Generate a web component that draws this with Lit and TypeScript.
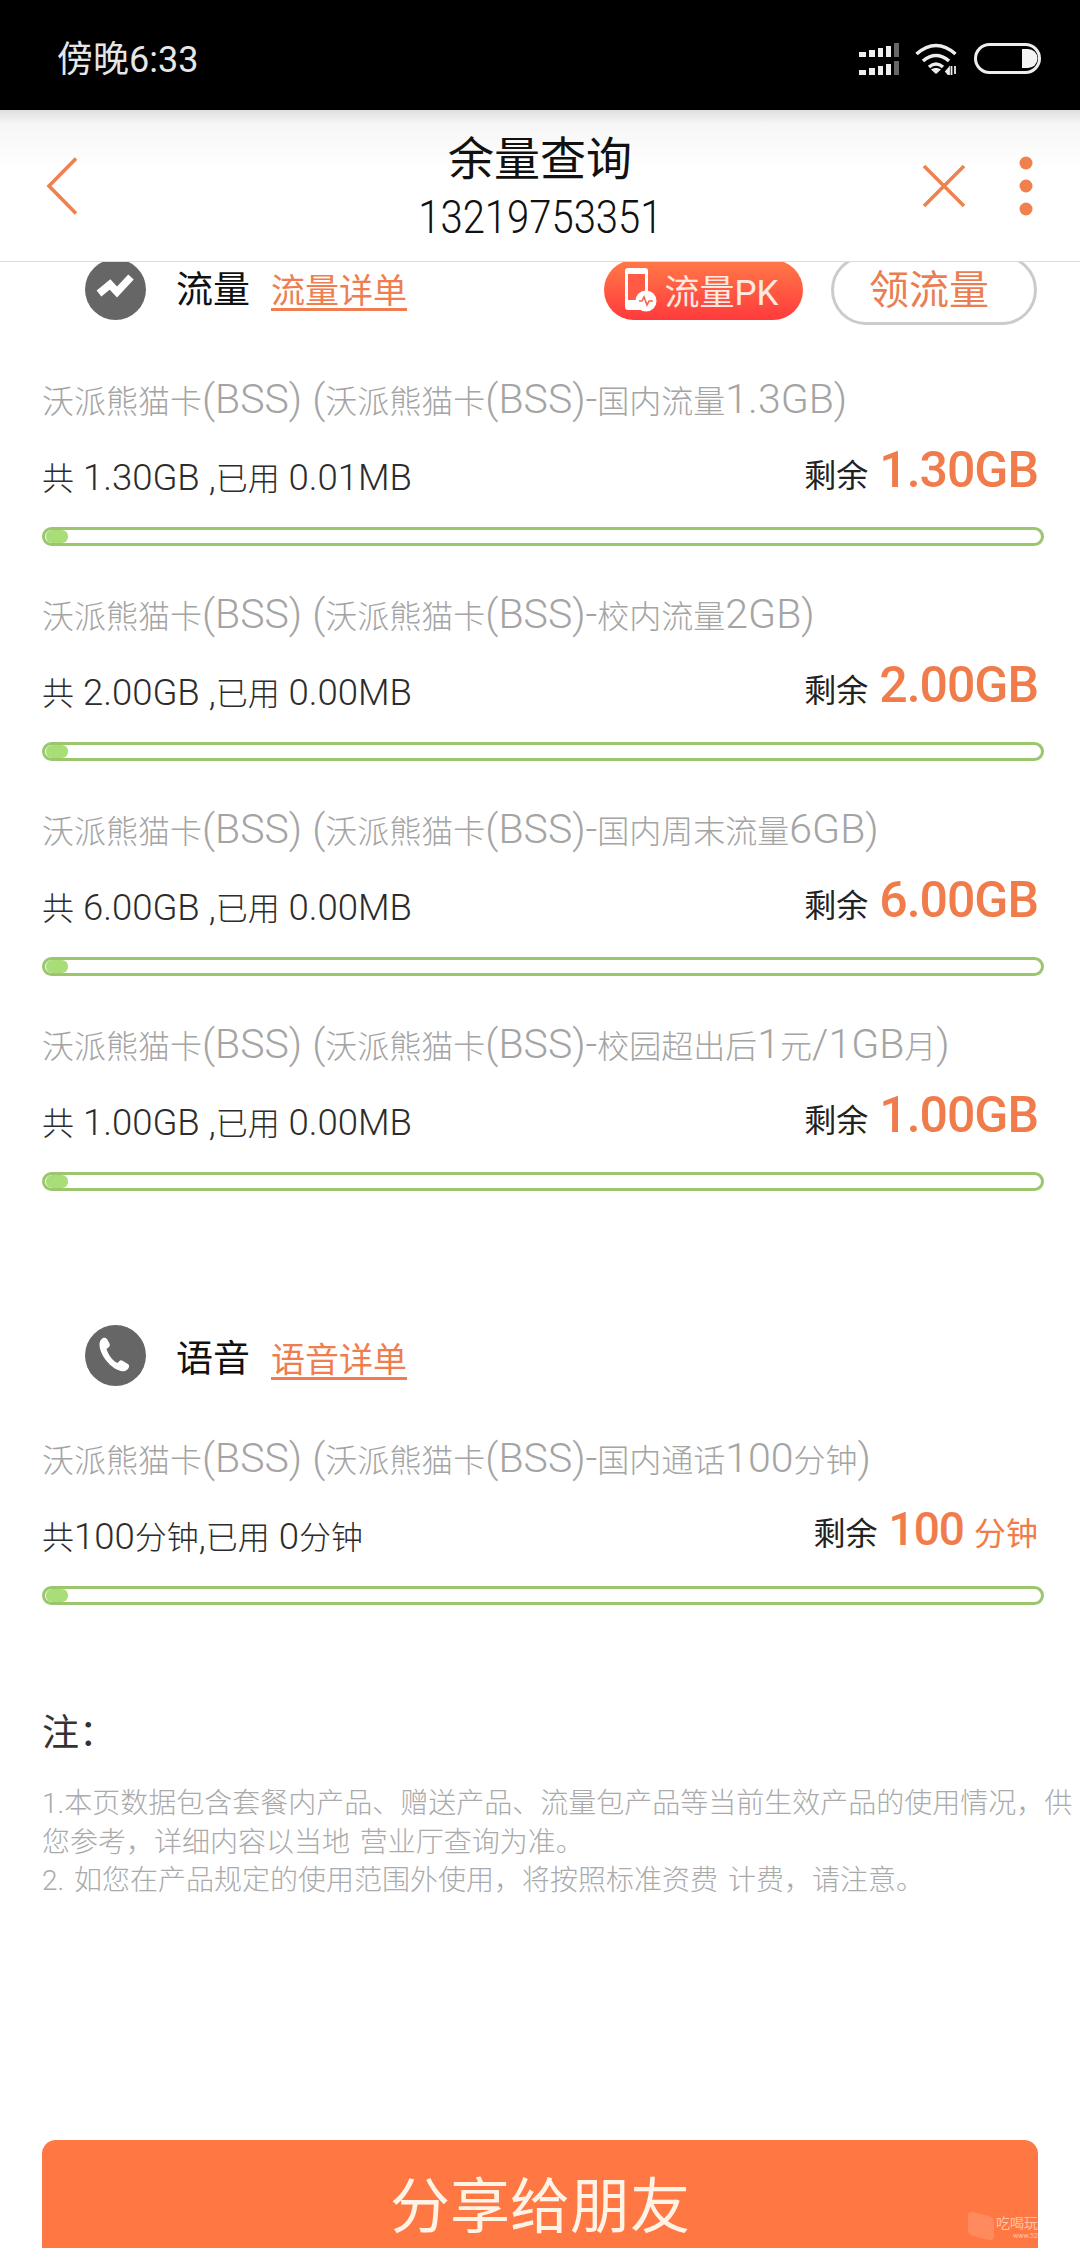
import { LitElement, html, css, svg } from "lit";
import { customElement } from "lit/decorators.js";

interface Item { name: string; detail: string; left: string; unit?: string }

const data: Item[] = [
  { name: "沃派熊猫卡(BSS) (沃派熊猫卡(BSS)-国内流量1.3GB)", detail: "共 1.30GB ,已用 0.01MB", left: "1.30GB" },
  { name: "沃派熊猫卡(BSS) (沃派熊猫卡(BSS)-校内流量2GB)", detail: "共 2.00GB ,已用 0.00MB", left: "2.00GB" },
  { name: "沃派熊猫卡(BSS) (沃派熊猫卡(BSS)-国内周末流量6GB)", detail: "共 6.00GB ,已用 0.00MB", left: "6.00GB" },
  { name: "沃派熊猫卡(BSS) (沃派熊猫卡(BSS)-校园超出后1元/1GB月)", detail: "共 1.00GB ,已用 0.00MB", left: "1.00GB" },
];
const voice: Item = { name: "沃派熊猫卡(BSS) (沃派熊猫卡(BSS)-国内通话100分钟)", detail: "共100分钟,已用 0分钟", left: "100", unit: "分钟" };

/** The reference's Latin glyphs run larger than its CJK ones: wrap Latin runs so they can be sized apart. */
const mix = (text: string) =>
  text.split(/([A-Za-z0-9.()\/,\- ]+)/).map((p, i) => (i % 2 ? html`<span class="lat">${p}</span>` : p));

@customElement("app-root")
export class AppRoot extends LitElement {
  static styles = css`
    :host { display: block; width: 1080px; height: 2248px; overflow: hidden; background: #fff; font-family: Roboto, "Noto Sans CJK SC", sans-serif; }
    .lat { line-height: 0; }
    .status { height: 110px; background: #000; display: flex; align-items: center; padding: 0 39px 0 57px; box-sizing: border-box; color: #e6e6e6; font-size: 36px; position: relative; z-index: 3; }
    .status .time { flex: 1; margin-top: 2px; }
    .status svg { display: block; margin-top: 7px; }
    .sig { margin-right: 15px; }
    .wifi { margin-right: 15px; }
    .header { height: 152px; box-sizing: border-box; border-bottom: 1px solid #dcdcdc; background: linear-gradient(#dedede, #f6f6f6 9%, #fff 40%); display: grid; grid-template-columns: 1fr auto 1fr; align-items: center; position: relative; z-index: 2; }
    .back { padding-left: 46px; }
    .back svg, .close, .dots { display: block; }
    .mid { text-align: center; color: #111; padding-top: 9px; }
    .title { font-size: 46px; line-height: 56px; margin-top: -3px; }
    .phone { font-size: 46px; line-height: 60px; font-weight: 300; transform: scaleX(.87); }
    .acts { display: flex; justify-content: flex-end; align-items: center; gap: 53px; padding-right: 47px; }
    .body { margin-top: -3px; position: relative; z-index: 1; }
    .head { height: 61px; display: flex; align-items: center; padding: 0 43px 0 85px; }
    .ico { width: 61px; height: 61px; flex: none; }
    .ico svg { display: block; }
    .lbl { font-size: 37px; color: #111; margin-left: 30px; }
    .link { font-size: 34px; color: #ee7d50; text-decoration: underline; text-underline-offset: 5px; margin-left: 21px; margin-top: 4px; }
    .head.top .lbl, .head.top .link { position: relative; top: -3px; }
    .pk { margin-left: auto; width: 199px; height: 60px; border-radius: 30px; background: linear-gradient(#ff7a48, #ff3a3c); color: #ffe9e0; font-size: 35px; display: flex; align-items: center; justify-content: center; gap: 6px; box-sizing: border-box; padding-right: 4px; }
    .get { margin-left: 28px; width: 206px; height: 70px; border-radius: 35px; border: 3px solid #cbcbcb; box-sizing: border-box; color: #ea7e52; font-size: 40px; display: flex; align-items: center; justify-content: center; background: #fff; padding: 0 10px 6px 0; }
    .rows { padding: 0 36px 0 42px; margin-top: 58px; display: flex; flex-direction: column; gap: 47px; }
    .rows.v { margin-top: 51px; }
    .voice { margin-top: 134px; }
    .name { font-size: 32px; line-height: 44px; color: #a4a4a4; white-space: nowrap; font-weight: 300; padding-top: 2px; margin-bottom: -2px; }
    .name .lat { font-size: 41px; }
    .det { display: flex; justify-content: space-between; align-items: flex-start; margin-top: 18px; height: 60px; padding-right: 6px; }
    .used { font-size: 32px; line-height: 44px; color: #2c2c2c; margin-top: 17px; white-space: nowrap; font-weight: 300; }
    .used .lat { font-size: 36.5px; }
    .rem { font-size: 32px; line-height: 60px; color: #222; white-space: nowrap; }
    .rem b { font-size: 50px; font-weight: 500; letter-spacing: -1px; color: #f07c4c; margin-left: 3px; }
    .rem b.n { font-size: 46px; }
    .rem i { font-style: normal; font-size: 32px; color: #f07c4c; margin-left: 10px; }
    .bar { margin-top: 27px; height: 19px; border: 3px solid #9cc66e; border-radius: 10px; box-sizing: border-box; padding: 0 1px; background: #fff; }
    .fill { height: 100%; width: 22px; border-radius: 6px; background: #a9dd78; }
    .note-t { margin: 104px 0 0 42px; font-size: 37px; line-height: 50px; color: #333; }
    .notes { margin: 26px 0 0 42px; font-size: 28px; line-height: 38.5px; color: #aaa; font-weight: 300; word-spacing: 3px; }
    .share { position: relative; margin: 0 42px; height: 160px; background: #ff7743; border-radius: 14px; overflow: hidden; color: #fff3e6; font-size: 60px; text-align: center; line-height: 135px; }
    .wm { position: absolute; right: 0; top: 74px; display: flex; gap: 2px; color: #ffc4a6; font-size: 14px; line-height: 18px; }
    .wm span { display: block; width: 26px; height: 24px; background: #ff8a5e; border-radius: 5px; transform: skewY(14deg); }
    .wm small { display: block; font-size: 7px; line-height: 8px; text-align: right; }
    .spacer { height: 239px; }
  `;

  private row(it: Item) {
    return html`<div>
      <div class="name">${mix(it.name)}</div>
      <div class="det">
        <div class="used">${mix(it.detail)}</div>
        <div class="rem">剩余 <b class=${it.unit ? "n" : ""}>${it.left}</b>${it.unit ? html`<i>${it.unit}</i>` : ""}</div>
      </div>
      <div class="bar"><div class="fill"></div></div>
    </div>`;
  }

  private signal() {
    const xs = [859, 869, 878, 886, 894];
    const ws = [7, 6, 5, 5, 5];
    const hs = [5, 7, 9, 11, 14];
    return svg`<svg class="sig" width="42" height="32" viewBox="858 43 42 32">
      ${xs.map((x, i) => svg`
        <rect x=${x} y=${57 - hs[i]} width=${ws[i]} height=${hs[i]} fill=${i === 4 ? "#666" : "#eee"} />
        <rect x=${x} y=${75 - hs[i]} width=${ws[i]} height=${hs[i]} fill=${i === 4 ? "#666" : "#eee"} />`)}
    </svg>`;
  }

  render() {
    return html`
      <div class="status">
        <div class="time">傍晚6:33</div>
        ${this.signal()}
        <svg class="wifi" width="44" height="32" viewBox="0 0 44 32" fill="none" stroke="#eee" stroke-width="3.6">
          <path d="M1.500 11Q21-6 40.500 11" />
          <path d="M8 18Q21 7 34 18" />
          <path d="M14 24Q21 18 28 24" />
          <path d="M21 31l-5-4.500c3-2 7-2 10 0z" fill="#eee" stroke="none" />
          <path d="M34 25l-3 3.500 3 3.500zM36.500 23v9M40 23v8" fill="#eee" stroke-width="1.800" />
        </svg>
        <svg width="67" height="31" viewBox="0 0 67 31" fill="none">
          <rect x="1.5" y="1.5" width="64" height="28" rx="14" stroke="#eee" stroke-width="3" />
          <path d="M48 6h6a9.500 9.500 0 0 1 0 19h-6z" fill="#f4f4f4" />
        </svg>
      </div>
      <div class="header">
        <div class="back">
          <svg width="32" height="58" viewBox="0 0 32 58" fill="none" stroke="#f0814f" stroke-width="3.600"><path d="M30 1.500 3 29l27 27.500" /></svg>
        </div>
        <div class="mid">
          <div class="title">余量查询</div>
          <div class="phone">13219753351</div>
        </div>
        <div class="acts">
          <svg class="close" width="44" height="44" viewBox="0 0 44 44" fill="none" stroke="#f0814f" stroke-width="3.600"><path d="M2 2l40 40M42 2 2 42" /></svg>
          <svg class="dots" width="14" height="60" viewBox="0 0 14 60" fill="#f0814f"><circle cx="7" cy="7" r="6.500" /><circle cx="7" cy="30" r="6.500" /><circle cx="7" cy="53" r="6.500" /></svg>
        </div>
      </div>
      <div class="body">
        <div class="head top">
          <div class="ico">
            <svg width="61" height="61" viewBox="0 0 61 61"><circle cx="30.500" cy="30.500" r="30.500" fill="#666" />
              <path d="M14 34.500 25 25.500 32 33 46 18" fill="none" stroke="#fff" stroke-width="7.500" /></svg>
          </div>
          <div class="lbl">流量</div>
          <div class="link">流量详单</div>
          <div class="pk">
            <svg width="34" height="46" viewBox="0 0 34 46">
              <rect x="1" y="1" width="23" height="42" rx="3" fill="#fff" /><rect x="4" y="7" width="17" height="26" fill="#ff5b44" />
              <circle cx="22" cy="34" r="10.500" fill="#fff" /><path d="M15 34h3l2-4 3 8 2-4h4" fill="none" stroke="#f7644c" stroke-width="1.600" />
            </svg>
            <span>流量PK</span>
          </div>
          <div class="get">领流量</div>
        </div>
        <div class="rows">${data.map((d) => this.row(d))}</div>
        <div class="head voice">
          <div class="ico">
            <svg width="61" height="61" viewBox="0 0 61 61"><circle cx="30.500" cy="30.500" r="30.500" fill="#666" />
              <path d="M18 13c-5 3-4 9-1 16 4 8 11 15 19 17 4 1 7-1 8-4 .5-1.500-.5-2.500-1.500-3.200l-5-3c-1.500-1-2.500-.5-3.500.7l-1.500 1.500c-5-2-9-8-11-14l2.500-2c1-1 1-2 .5-3.500l-2.500-4.500c-1-1.200-2.500-1.500-4-1z" fill="#fff" /></svg>
          </div>
          <div class="lbl">语音</div>
          <div class="link">语音详单</div>
        </div>
        <div class="rows v">${this.row(voice)}</div>
        <div class="note-t">注：</div>
        <div class="notes">1.本页数据包含套餐内产品、赠送产品、流量包产品等当前生效产品的使用情况，供您参考，详细内容以当地 营业厅查询为准。<br />2. 如您在产品规定的使用范围外使用，将按照标准资费 计费，请注意。</div>
        <div class="spacer"></div>
        <div class="share">分享给朋友
          <div class="wm"><span></span><div>吃喝玩<small>www.52</small></div></div>
        </div>
      </div>
    `;
  }
}
